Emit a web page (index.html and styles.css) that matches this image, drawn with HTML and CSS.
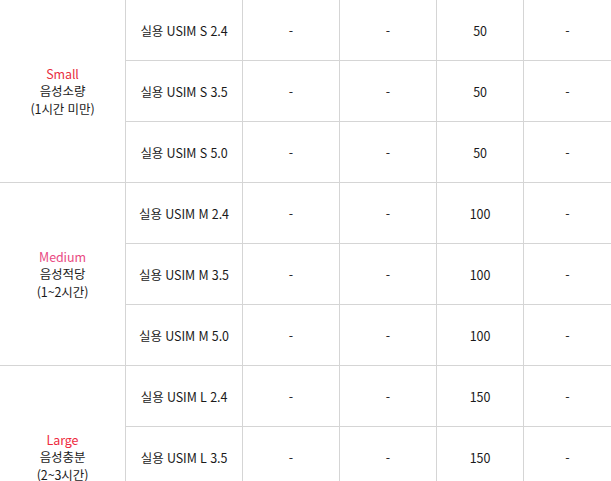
FILE: index.html
```html
<!DOCTYPE html>
<html lang="ko">
<head>
<meta charset="utf-8">
<link rel="stylesheet" href="styles.css">
</head>
<body>
<table class="plan">
  <colgroup>
    <col class="c1"><col class="c2"><col class="c3"><col class="c4"><col class="c5"><col class="c6">
  </colgroup>
  <tbody>
    <tr>
      <td rowspan="3" class="group"><span class="size small">Small</span><br>음성소량<br>(1시간 미만)</td>
      <td>실용 USIM S 2.4</td><td>-</td><td>-</td><td>50</td><td>-</td>
    </tr>
    <tr><td>실용 USIM S 3.5</td><td>-</td><td>-</td><td>50</td><td>-</td></tr>
    <tr><td>실용 USIM S 5.0</td><td>-</td><td>-</td><td>50</td><td>-</td></tr>
    <tr>
      <td rowspan="3" class="group"><span class="size medium">Medium</span><br>음성적당<br>(1~2시간)</td>
      <td>실용 USIM M 2.4</td><td>-</td><td>-</td><td>100</td><td>-</td>
    </tr>
    <tr><td>실용 USIM M 3.5</td><td>-</td><td>-</td><td>100</td><td>-</td></tr>
    <tr><td>실용 USIM M 5.0</td><td>-</td><td>-</td><td>100</td><td>-</td></tr>
    <tr>
      <td rowspan="3" class="group"><span class="size large">Large</span><br>음성충분<br>(2~3시간)</td>
      <td>실용 USIM L 2.4</td><td>-</td><td>-</td><td>150</td><td>-</td>
    </tr>
    <tr><td>실용 USIM L 3.5</td><td>-</td><td>-</td><td>150</td><td>-</td></tr>
    <tr><td>실용 USIM L 5.0</td><td>-</td><td>-</td><td>150</td><td>-</td></tr>
  </tbody>
</table>
</body>
</html>
```

FILE: styles.css
```css
html, body {
  margin: 0;
  padding: 0;
  background: #ffffff;
  overflow: hidden;
}
.plan {
  border-collapse: collapse;
  table-layout: fixed;
  width: 612px;
  margin-left: -1px;
  margin-top: -1px;
  font-family: "Noto Sans CJK KR", "Noto Sans", sans-serif;
  font-size: 12.5px;
  color: #1a1a1a;
  letter-spacing: -0.1px;
}
.c1 { width: 126px; }
.c2 { width: 117px; }
.c3 { width: 97px; }
.c4 { width: 97px; }
.c5 { width: 87px; }
.c6 { width: 88px; }
.plan td {
  border: 1px solid #d5d5d5;
  height: 61px;
  padding: 0;
  text-align: center;
  vertical-align: middle;
  line-height: 17px;
  box-sizing: border-box;
}
.plan td.group { line-height: 17.5px; }
.size.small { color: #e8303f; }
.size.medium { color: #e94a82; }
.size.large { color: #ee2a3e; }
```
